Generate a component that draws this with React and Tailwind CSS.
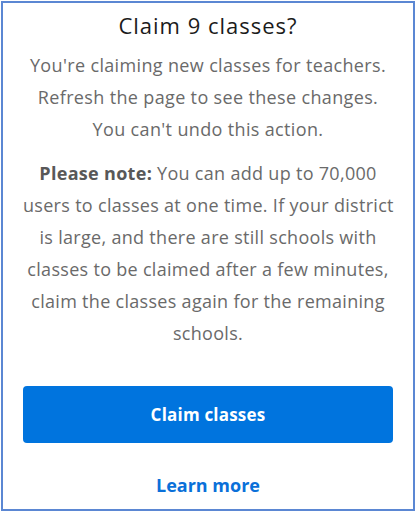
export default function App() {
  return (
    <div className="ml-px mt-px h-[510px] w-[414px] border-2 border-[#5b87d3] bg-white px-5 pt-2 text-center font-['Open_Sans',sans-serif]">
      <h2 className="text-[22px] leading-[28px] tracking-[1px] text-[#1b1b1b]">Claim 9 classes?</h2>
      <p className="mt-[10px] whitespace-nowrap text-[18px] leading-[32px] tracking-[0.35px] text-[#6a6a6a]">
        You're claiming new classes for teachers.
        <br />
        Refresh the page to see these changes.
        <br />
        You can't undo this action.
      </p>
      <p className="mt-3 whitespace-nowrap text-[18px] leading-[32px] tracking-[0.3px] text-[#6a6a6a]">
        <span className="font-bold text-[#585858]">Please note:</span> You can add up to 70,000
        <br />
        users to classes at one time. If your district
        <br />
        is large, and there are still schools with
        <br />
        classes to be claimed after a few minutes,
        <br />
        claim the classes again for the remaining
        <br />
        schools.
      </p>
      <button className="mt-[37px] h-[57px] w-full rounded-[4px] bg-[#0074de] text-[17px] font-bold tracking-[0.2px] text-white">
        Claim classes
      </button>
      <div className="mt-[30px] text-[18px] font-bold leading-[24px] text-[#0a70d9]">Learn more</div>
    </div>
  );
}
